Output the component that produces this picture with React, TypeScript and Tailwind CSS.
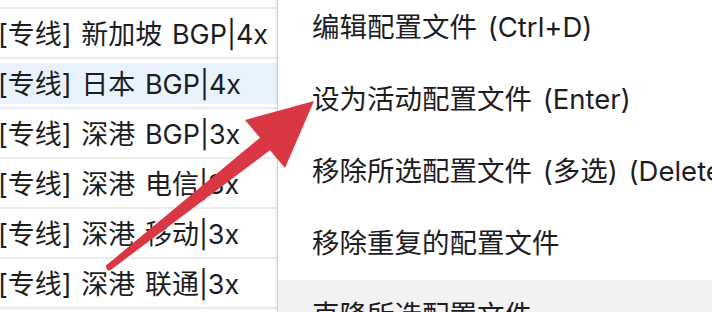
import React from 'react';

const rows = [
  '[专线] 新加坡 BGP|4x',
  '[专线] 日本 BGP|4x',
  '[专线] 深港 BGP|3x',
  '[专线] 深港 电信|3x',
  '[专线] 深港 移动|3x',
  '[专线] 深港 联通|3x',
];

const menu = [
  '编辑配置文件 (Ctrl+D)',
  '设为活动配置文件 (Enter)',
  '移除所选配置文件 (多选) (Delete)',
  '移除重复的配置文件',
  '克隆所选配置文件',
];

const font = { fontFamily: 'Inter, "Noto Sans CJK SC", sans-serif' };

export default function App() {
  return (
    <div className="relative h-[312px] w-[712px] overflow-hidden bg-white text-[#1d1d1f]" style={font}>
      <div className="flex h-full">
        {/* profile list */}
        <div className="w-[278px] shrink-0 border-r border-[#dcdcdc] text-[27px] [word-spacing:2px]">
          <div className="h-[9px] border-b-2 border-[#ebebeb]" />
          {rows.map((r, i) => (
            <div key={r} className="h-[50px] border-b-2 border-[#ebebeb] pt-[4px] pb-[3px]">
              <div className={`flex h-full items-center whitespace-nowrap pt-[3px] ${i === 1 ? 'bg-[#e9f3fe]' : ''}`}>
                <span className="-ml-[2px]">{r}</span>
              </div>
            </div>
          ))}
        </div>

        {/* context menu */}
        <div className="-mt-[8px] flex-1 bg-white text-[27.5px] shadow-[-2px_0_4px_rgba(0,0,0,0.08)] [word-spacing:3px]">
          {menu.map((m, i) => (
            <div key={m} className={`flex h-[72px] items-center whitespace-nowrap pl-[34px] ${i === 4 ? 'bg-[#f2f2f2]' : ''}`}>
              {m}
            </div>
          ))}
        </div>
      </div>

      {/* annotation arrow */}
      <svg className="absolute left-0 top-0" width="712" height="312" viewBox="0 0 712 312">
        <path
          d="M106 265.5 L260 137.8 L245 120 L314 101 L285 168 L270 150.2 L110 270.5 Q106 271 106 265.5 Z"
          fill="#d93744"
          strokeLinejoin="round"
        />
      </svg>
    </div>
  );
}
